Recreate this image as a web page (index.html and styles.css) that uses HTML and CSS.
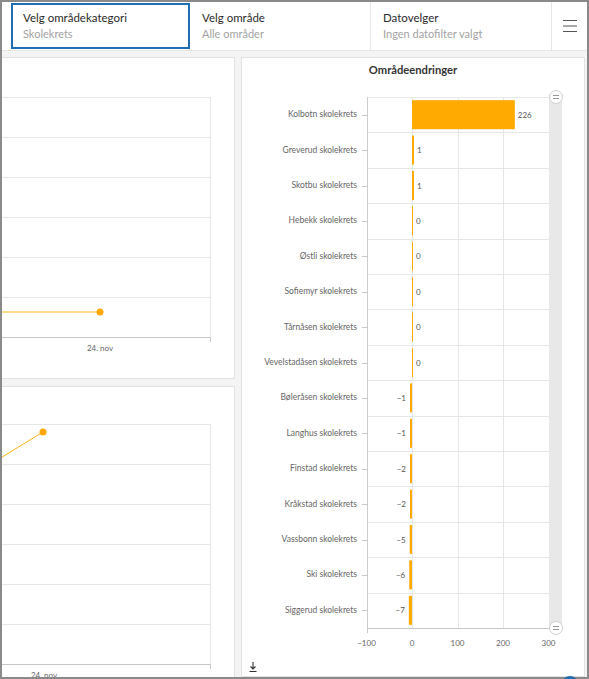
FILE: index.html
```html
<!DOCTYPE html>
<html lang="no">
<head>
  <meta charset="UTF-8" />
  <meta name="viewport" content="width=device-width, initial-scale=1.0" />
  <title>Områdeendringer</title>
  <link rel="stylesheet" href="styles.css">
</head>
<body>
  <div class="frame">
    <div class="header">
      <div class="selector active">
        <div class="sel-title">Velg områdekategori</div>
        <div class="sel-value">Skolekrets</div>
      </div>
      <div class="selector">
        <div class="sel-title">Velg område</div>
        <div class="sel-value">Alle områder</div>
      </div>
      <div class="selector divided">
        <div class="sel-title">Datovelger</div>
        <div class="sel-value">Ingen datofilter valgt</div>
      </div>
      <div class="menu">
        <svg width="14" height="12" viewBox="0 0 14 12">
          <path d="M0 0.5H14M0 6H14M0 11.5H14" stroke="#555" stroke-width="1" fill="none" />
        </svg>
      </div>
    </div>

    <div class="content">
      <div class="left-col">
        <div class="panel line-panel first">
          <svg width="271" height="320" viewBox="-37 58 271 320">
            <g stroke="#e6e6e6" stroke-width="1">
              <line x1="-37" y1="97.5" x2="210" y2="97.5" />
              <line x1="-37" y1="137.5" x2="210" y2="137.5" />
              <line x1="-37" y1="177.5" x2="210" y2="177.5" />
              <line x1="-37" y1="217.5" x2="210" y2="217.5" />
              <line x1="-37" y1="257.5" x2="210" y2="257.5" />
              <line x1="-37" y1="297.5" x2="210" y2="297.5" />
              <line x1="210.5" y1="97" x2="210.5" y2="337" />
            </g>
            <g stroke="#c8c8c8" stroke-width="1">
              <line x1="-37" y1="337.5" x2="211" y2="337.5" />
              <line x1="210.5" y1="337" x2="210.5" y2="342" />
            </g>
            <polyline points="-37,312 100,312" fill="none" stroke="#ffb31a" stroke-width="1" />
            <circle cx="100" cy="312" r="3.5" fill="#ffa800" />
            <text x="100" y="351" class="axis-label" text-anchor="middle">24. nov</text>
          </svg>
        </div>
        <div class="panel line-panel second">
          <svg width="271" height="318" viewBox="-37 387 271 318">
            <g stroke="#e6e6e6" stroke-width="1">
              <line x1="-37" y1="424.5" x2="210" y2="424.5" />
              <line x1="-37" y1="464.5" x2="210" y2="464.5" />
              <line x1="-37" y1="504.5" x2="210" y2="504.5" />
              <line x1="-37" y1="544.5" x2="210" y2="544.5" />
              <line x1="-37" y1="584.5" x2="210" y2="584.5" />
              <line x1="-37" y1="624.5" x2="210" y2="624.5" />
              <line x1="210.5" y1="424" x2="210.5" y2="664" />
            </g>
            <g stroke="#c8c8c8" stroke-width="1">
              <line x1="-37" y1="664.5" x2="211" y2="664.5" />
              <line x1="210.5" y1="664" x2="210.5" y2="669" />
            </g>
            <polyline points="-37,481 43,432" fill="none" stroke="#ffb31a" stroke-width="1" />
            <circle cx="43" cy="432" r="3.5" fill="#ffa800" />
            <text x="44" y="678" class="axis-label" text-anchor="middle">24. nov</text>
          </svg>
        </div>
      </div>

      <div class="panel bar-panel">
        <svg id="barChart" width="342" height="603" viewBox="242 58 342 603"></svg>
        <div class="export">
          <svg width="8" height="10" viewBox="0 0 8 10">
            <path d="M4 0V6.5M1.5 4.5L4 7L6.5 4.5M0.5 9.5H7.5" stroke="#333" stroke-width="1.1" fill="none" />
          </svg>
        </div>
      </div>
    </div>
  </div>
  <div class="fab"></div>

  <script>
    const areas = [
      ["Kolbotn skolekrets", 226],
      ["Greverud skolekrets", 1],
      ["Skotbu skolekrets", 1],
      ["Hebekk skolekrets", 0],
      ["Østli skolekrets", 0],
      ["Sofiemyr skolekrets", 0],
      ["Tårnåsen skolekrets", 0],
      ["Vevelstadåsen skolekrets", 0],
      ["Bøleråsen skolekrets", -1],
      ["Langhus skolekrets", -1],
      ["Finstad skolekrets", -2],
      ["Kråkstad skolekrets", -2],
      ["Vassbonn skolekrets", -5],
      ["Ski skolekrets", -6],
      ["Siggerud skolekrets", -7]
    ];

    const chart = document.getElementById("barChart");
    const zeroX = 412;
    const scale = 0.455;
    const plotTop = 97;
    const plotBottom = 628;
    const rowH = (plotBottom - plotTop) / areas.length;
    const xFor = v => zeroX + v * scale;
    let svg = "";

    svg += `<text x="413" y="74" class="chart-title" text-anchor="middle">Områdeendringer</text>`;

    // category grid
    for (let i = 0; i < areas.length; i++) {
      const y = Math.round(plotTop + i * rowH) + 0.5;
      svg += `<line x1="367" y1="${y}" x2="549" y2="${y}" stroke="#e6e6e6" />`;
    }

    // value grid + labels
    [-100, 0, 100, 200, 300].forEach(v => {
      const x = Math.round(xFor(v)) + 0.5;
      const color = v === -100 ? "#cccccc" : "#e6e6e6";
      svg += `<line x1="${x}" y1="${plotTop}" x2="${x}" y2="${plotBottom}" stroke="${color}" />`;
      const label = v < 0 ? "\u2212" + Math.abs(v) : v;
      svg += `<text x="${xFor(v)}" y="646" class="axis-label" text-anchor="middle">${label}</text>`;
    });

    svg += `<line x1="367" y1="628.5" x2="549" y2="628.5" stroke="#c8c8c8" />`;
    svg += `<line x1="367.5" y1="628" x2="367.5" y2="633" stroke="#c8c8c8" />`;

    areas.forEach(([name, value], i) => {
      const cy = plotTop + (i + 0.5) * rowH;
      svg += `<text x="357" y="${cy + 2.5}" class="cat-label" text-anchor="end">${name}</text>`;
      svg += `<line x1="362" y1="${Math.round(cy) + 0.5}" x2="367" y2="${Math.round(cy) + 0.5}" stroke="#c8c8c8" />`;

      let w = Math.abs(value) * scale;
      if (value !== 0) w = Math.max(w, 2);
      else w = 1;
      const x = value < 0 ? zeroX - w : zeroX;
      svg += `<rect x="${x}" y="${cy - 14.5}" width="${w}" height="29" fill="#ffaa00" />`;

      const label = value < 0 ? "\u2212" + Math.abs(value) : value;
      if (value < 0) {
        svg += `<text x="${x - 4}" y="${cy + 3}" class="value-label" text-anchor="end">${label}</text>`;
      } else {
        svg += `<text x="${x + w + 3}" y="${cy + 3}" class="value-label">${label}</text>`;
      }
    });

    // scrollbar
    svg += `<rect x="549" y="${plotTop}" width="13" height="${plotBottom - plotTop}" fill="#e8e8e8" />`;
    [plotTop, plotBottom].forEach(y => {
      svg += `<circle cx="556" cy="${y}" r="6.5" fill="#fff" stroke="#cfcfcf" />`;
      svg += `<path d="M553 ${y - 1.5}H559M553 ${y + 1.5}H559" stroke="#999" />`;
    });

    chart.innerHTML = svg;
  </script>
</body>
</html>
```

FILE: styles.css
```css
html, body {
  margin: 0;
  height: 100%;
  overflow: hidden;
}
body {
  position: relative;
  font-family: Lato, "Noto Sans", sans-serif;
  background: #fff;
}
.frame {
  width: 589px;
  height: 679px;
  box-sizing: border-box;
  border: 2px solid #8a8a8a;
  background: #f4f4f4;
  display: flex;
  flex-direction: column;
  overflow: hidden;
}
.header {
  display: flex;
  height: 48px;
  flex-shrink: 0;
  background: #fff;
  border-bottom: 1px solid #e6e6e6;
  padding-left: 9px;
}
.selector {
  width: 180px;
  box-sizing: border-box;
  padding: 0 12px;
  display: flex;
  flex-direction: column;
  justify-content: center;
  line-height: 16px;
  white-space: nowrap;
}
.selector.active {
  width: 179px;
  margin: 1px 0;
  padding: 0 10px;
  border: 2px solid #1f6db3;
}
.selector.divided {
  width: 181px;
  border-left: 1px solid #e6e6e6;
}
.sel-title {
  font-size: 11.5px;
  color: #2b2b2b;
}
.sel-value {
  font-size: 11px;
  color: #a3a3a3;
}
.menu {
  flex: 1;
  border-left: 1px solid #e6e6e6;
  display: flex;
  align-items: center;
  justify-content: center;
}
.content {
  flex: 1;
  min-height: 0;
  display: flex;
  gap: 6px;
  padding: 6px 2px 0 0;
}
.left-col {
  width: 233px;
  flex-shrink: 0;
  overflow: hidden;
  display: flex;
  flex-direction: column;
  gap: 7px;
}
.panel {
  background: #fff;
  border: 1px solid #e2e2e2;
}
.line-panel {
  margin-left: -40px;
  width: 273px;
  box-sizing: border-box;
  flex-shrink: 0;
}
.line-panel svg {
  display: block;
}
.line-panel.first {
  height: 322px;
}
.line-panel.second {
  height: 320px;
}
.bar-panel {
  flex: 1;
  display: flex;
  flex-direction: column;
}
.bar-panel svg {
  display: block;
}
.export {
  padding: 1px 0 0 7px;
  line-height: 0;
}
.chart-title {
  font-size: 11.2px;
  font-weight: bold;
  fill: #333;
}
.axis-label {
  font-size: 8px;
  fill: #666;
}
.cat-label {
  font-size: 8.5px;
  fill: #666;
}
.value-label {
  font-size: 8px;
  fill: #555;
}
.fab {
  position: absolute;
  left: 562px;
  top: 676px;
  width: 16px;
  height: 16px;
  border-radius: 50%;
  background: #1f6db3;
}
```
